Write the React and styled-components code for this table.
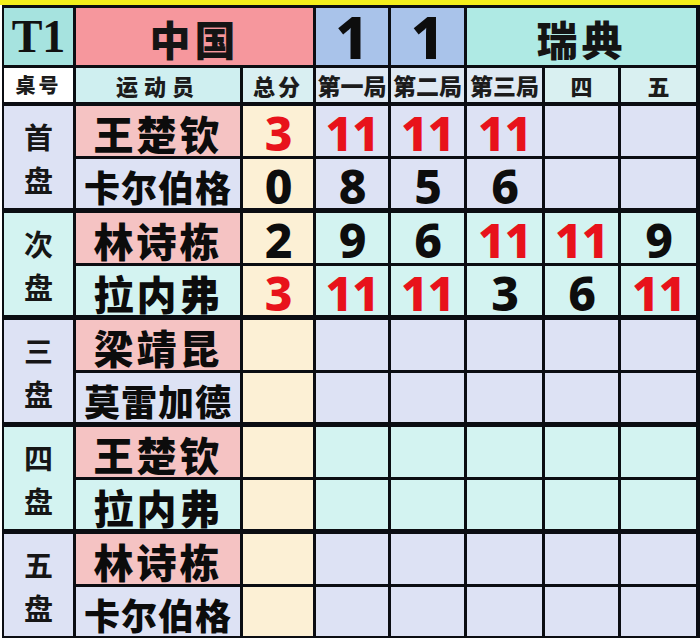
import React from 'react';
import styled, { createGlobalStyle } from 'styled-components';

const GlobalStyle = createGlobalStyle`
  html, body {
    margin: 0;
    padding: 0;
    background: #ffffff;
  }
`;

const CJK = '"Noto Sans CJK SC", "Noto Sans", sans-serif';
const NUM = '"Noto Sans", "Liberation Sans", sans-serif';
const COLUMNS = '69px 164px 70px 72px 73px 75px 73px 75px';

const tones = {
  lav: '#dde2f4',
  cyan: '#d3f3f1',
};

const Page = styled.div`
  width: 700px;
  border-top: 5px solid #f3ee1b;
  box-sizing: border-box;
  padding-left: 2px;
`;

const Table = styled.div`
  display: flex;
  flex-direction: column;
  background: #0b0d12;
  padding: 3px 4px 2px 2px;
`;

const Header = styled.div`
  display: grid;
  grid-template-columns: ${COLUMNS};
  grid-template-rows: 57px 34px;
  gap: 3px;
`;

const Block = styled.div`
  display: grid;
  grid-template-columns: ${COLUMNS};
  grid-template-rows: 50px 49px;
  gap: 3px;
  margin-top: ${(p) => (p.$first ? 4 : 5)}px;
`;

const Cell = styled.div`
  display: flex;
  align-items: center;
  justify-content: center;
  background: ${(p) => p.$bg};
  grid-column: ${(p) => p.$col || 'auto'};
  grid-row: ${(p) => p.$row || 'auto'};
  white-space: nowrap;
`;

const TeamTag = styled.span`
  display: block;
  font-family: "Liberation Serif", serif;
  font-weight: 700;
  font-size: 46px;
  color: #111;
  line-height: 1;
`;

const TeamName = styled.span`
  display: block;
  font-family: ${CJK};
  font-weight: 900;
  font-size: 41px;
  letter-spacing: 4px;
  color: #141414;
  line-height: 1;
  padding-top: 4px;
`;

const BigOne = styled.span`
  display: block;
  font-family: ${NUM};
  font-weight: 800;
  font-size: 58px;
  color: #0d0d0d;
  line-height: 1;
`;

const ColLabel = styled.span`
  display: block;
  font-family: ${CJK};
  font-weight: 900;
  font-size: ${(p) => p.$size || 22}px;
  letter-spacing: ${(p) => p.$spacing || 0}px;
  color: #1c1c1c;
  line-height: 1;
`;

const Label = styled.div`
  display: flex;
  flex-direction: column;
  align-items: center;
  gap: 14px;
  font-family: ${CJK};
  font-weight: 700;
  font-size: 29px;
  line-height: 1;
  color: #161616;
  padding-top: 2px;
`;

const Name = styled.span`
  display: block;
  font-family: ${CJK};
  font-weight: 900;
  font-size: ${(p) => (p.$long ? 36 : 40)}px;
  letter-spacing: ${(p) => (p.$long ? 1 : 3)}px;
  color: #0c0c0c;
  line-height: 1;
  padding-top: 4px;
`;

const Score = styled.span`
  display: block;
  font-family: ${NUM};
  font-weight: 800;
  font-size: 48px;
  letter-spacing: -1px;
  color: ${(p) => (p.$win ? '#e8121b' : '#0d0d0d')};
  line-height: 1;
  padding-top: 4px;
`;

const blocks = [
  {
    label: ['首', '盘'],
    tone: 'lav',
    a: { name: '王楚钦', total: '3', games: ['11', '11', '11', '', ''] },
    b: { name: '卡尔伯格', total: '0', games: ['8', '5', '6', '', ''] },
  },
  {
    label: ['次', '盘'],
    tone: 'cyan',
    a: { name: '林诗栋', total: '2', games: ['9', '6', '11', '11', '9'] },
    b: { name: '拉内弗', total: '3', games: ['11', '11', '3', '6', '11'] },
  },
  {
    label: ['三', '盘'],
    tone: 'lav',
    a: { name: '梁靖昆', total: '', games: ['', '', '', '', ''] },
    b: { name: '莫雷加德', total: '', games: ['', '', '', '', ''] },
  },
  {
    label: ['四', '盘'],
    tone: 'cyan',
    a: { name: '王楚钦', total: '', games: ['', '', '', '', ''] },
    b: { name: '拉内弗', total: '', games: ['', '', '', '', ''] },
  },
  {
    label: ['五', '盘'],
    tone: 'lav',
    a: { name: '林诗栋', total: '', games: ['', '', '', '', ''] },
    b: { name: '卡尔伯格', total: '', games: ['', '', '', '', ''] },
  },
];

const won = (mine, theirs) => mine !== '' && Number(mine) > Number(theirs || 0);

const PlayerRow = ({ player, other, tone, row }) => (
  <>
    <Cell $bg={row === 1 ? '#f5c3c3' : tones[tone]} $col="2" $row={row}>
      <Name $long={player.name.length > 3}>{player.name}</Name>
    </Cell>
    <Cell $bg="#fcf0d5" $col="3" $row={row}>
      {player.total && <Score $win={won(player.total, other.total)}>{player.total}</Score>}
    </Cell>
    {player.games.map((g, i) => (
      <Cell key={i} $bg={tones[tone]} $col={String(i + 4)} $row={row}>
        {g && <Score $win={won(g, other.games[i])}>{g}</Score>}
      </Cell>
    ))}
  </>
);

const MatchBlock = ({ block, first }) => (
  <Block $first={first}>
    <Cell $bg={tones[block.tone]} $col="1" $row="1 / span 2">
      <Label>
        <span>{block.label[0]}</span>
        <span>{block.label[1]}</span>
      </Label>
    </Cell>
    <PlayerRow player={block.a} other={block.b} tone={block.tone} row={1} />
    <PlayerRow player={block.b} other={block.a} tone={block.tone} row={2} />
  </Block>
);

export default function App() {
  return (
    <>
      <GlobalStyle />
      <Page>
        <Table>
          <Header>
            <Cell $bg="#a6e3df">
              <TeamTag>T1</TeamTag>
            </Cell>
            <Cell $bg="#f6979d" $col="2 / span 2">
              <TeamName>中国</TeamName>
            </Cell>
            <Cell $bg="#a9c3ea">
              <BigOne>1</BigOne>
            </Cell>
            <Cell $bg="#a9c3ea">
              <BigOne>1</BigOne>
            </Cell>
            <Cell $bg="#afeae4" $col="6 / span 3">
              <TeamName>瑞典</TeamName>
            </Cell>

            <Cell $bg="#ffffff">
              <ColLabel $size={20} $spacing={3}>桌号</ColLabel>
            </Cell>
            <Cell $bg="#cfeff0">
              <ColLabel $size={22} $spacing={6}>运动员</ColLabel>
            </Cell>
            <Cell $bg="#d9eff2">
              <ColLabel $size={22} $spacing={3}>总分</ColLabel>
            </Cell>
            <Cell $bg="#dfe9f3">
              <ColLabel $size={23}>第一局</ColLabel>
            </Cell>
            <Cell $bg="#dfe9f3">
              <ColLabel $size={23}>第二局</ColLabel>
            </Cell>
            <Cell $bg="#dfe9f3">
              <ColLabel $size={23}>第三局</ColLabel>
            </Cell>
            <Cell $bg="#d9f0f1">
              <ColLabel>四</ColLabel>
            </Cell>
            <Cell $bg="#d9f0f1">
              <ColLabel>五</ColLabel>
            </Cell>
          </Header>
          {blocks.map((b, i) => (
            <MatchBlock key={i} block={b} first={i === 0} />
          ))}
        </Table>
      </Page>
    </>
  );
}
